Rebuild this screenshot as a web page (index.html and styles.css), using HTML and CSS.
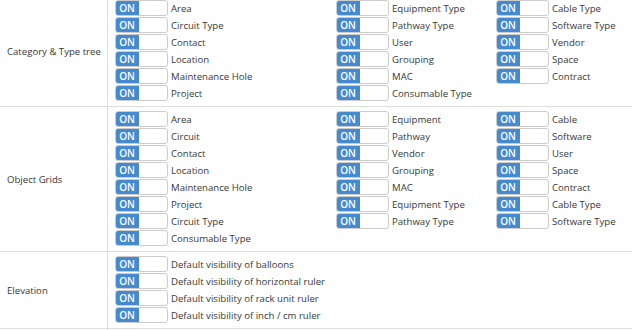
FILE: index.html
```html
<!DOCTYPE html>
<html>
<head>
<meta charset="utf-8">
<link rel="stylesheet" href="styles.css">
</head>
<body>
<div class="settings">
  <div class="section">
    <div class="section-label">Category &amp; Type tree</div>
    <div class="section-body">
      <div class="col">
        <div class="opt"><span class="toggle"><span class="on">ON</span></span><span class="opt-label">Area</span></div>
        <div class="opt"><span class="toggle"><span class="on">ON</span></span><span class="opt-label">Circuit Type</span></div>
        <div class="opt"><span class="toggle"><span class="on">ON</span></span><span class="opt-label">Contact</span></div>
        <div class="opt"><span class="toggle"><span class="on">ON</span></span><span class="opt-label">Location</span></div>
        <div class="opt"><span class="toggle"><span class="on">ON</span></span><span class="opt-label">Maintenance Hole</span></div>
        <div class="opt"><span class="toggle"><span class="on">ON</span></span><span class="opt-label">Project</span></div>
      </div>
      <div class="col">
        <div class="opt"><span class="toggle"><span class="on">ON</span></span><span class="opt-label">Equipment Type</span></div>
        <div class="opt"><span class="toggle"><span class="on">ON</span></span><span class="opt-label">Pathway Type</span></div>
        <div class="opt"><span class="toggle"><span class="on">ON</span></span><span class="opt-label">User</span></div>
        <div class="opt"><span class="toggle"><span class="on">ON</span></span><span class="opt-label">Grouping</span></div>
        <div class="opt"><span class="toggle"><span class="on">ON</span></span><span class="opt-label">MAC</span></div>
        <div class="opt"><span class="toggle"><span class="on">ON</span></span><span class="opt-label">Consumable Type</span></div>
      </div>
      <div class="col">
        <div class="opt"><span class="toggle"><span class="on">ON</span></span><span class="opt-label">Cable Type</span></div>
        <div class="opt"><span class="toggle"><span class="on">ON</span></span><span class="opt-label">Software Type</span></div>
        <div class="opt"><span class="toggle"><span class="on">ON</span></span><span class="opt-label">Vendor</span></div>
        <div class="opt"><span class="toggle"><span class="on">ON</span></span><span class="opt-label">Space</span></div>
        <div class="opt"><span class="toggle"><span class="on">ON</span></span><span class="opt-label">Contract</span></div>
      </div>
    </div>
  </div>
  <div class="section">
    <div class="section-label">Object Grids</div>
    <div class="section-body">
      <div class="col">
        <div class="opt"><span class="toggle"><span class="on">ON</span></span><span class="opt-label">Area</span></div>
        <div class="opt"><span class="toggle"><span class="on">ON</span></span><span class="opt-label">Circuit</span></div>
        <div class="opt"><span class="toggle"><span class="on">ON</span></span><span class="opt-label">Contact</span></div>
        <div class="opt"><span class="toggle"><span class="on">ON</span></span><span class="opt-label">Location</span></div>
        <div class="opt"><span class="toggle"><span class="on">ON</span></span><span class="opt-label">Maintenance Hole</span></div>
        <div class="opt"><span class="toggle"><span class="on">ON</span></span><span class="opt-label">Project</span></div>
        <div class="opt"><span class="toggle"><span class="on">ON</span></span><span class="opt-label">Circuit Type</span></div>
        <div class="opt"><span class="toggle"><span class="on">ON</span></span><span class="opt-label">Consumable Type</span></div>
      </div>
      <div class="col">
        <div class="opt"><span class="toggle"><span class="on">ON</span></span><span class="opt-label">Equipment</span></div>
        <div class="opt"><span class="toggle"><span class="on">ON</span></span><span class="opt-label">Pathway</span></div>
        <div class="opt"><span class="toggle"><span class="on">ON</span></span><span class="opt-label">Vendor</span></div>
        <div class="opt"><span class="toggle"><span class="on">ON</span></span><span class="opt-label">Grouping</span></div>
        <div class="opt"><span class="toggle"><span class="on">ON</span></span><span class="opt-label">MAC</span></div>
        <div class="opt"><span class="toggle"><span class="on">ON</span></span><span class="opt-label">Equipment Type</span></div>
        <div class="opt"><span class="toggle"><span class="on">ON</span></span><span class="opt-label">Pathway Type</span></div>
      </div>
      <div class="col">
        <div class="opt"><span class="toggle"><span class="on">ON</span></span><span class="opt-label">Cable</span></div>
        <div class="opt"><span class="toggle"><span class="on">ON</span></span><span class="opt-label">Software</span></div>
        <div class="opt"><span class="toggle"><span class="on">ON</span></span><span class="opt-label">User</span></div>
        <div class="opt"><span class="toggle"><span class="on">ON</span></span><span class="opt-label">Space</span></div>
        <div class="opt"><span class="toggle"><span class="on">ON</span></span><span class="opt-label">Contract</span></div>
        <div class="opt"><span class="toggle"><span class="on">ON</span></span><span class="opt-label">Cable Type</span></div>
        <div class="opt"><span class="toggle"><span class="on">ON</span></span><span class="opt-label">Software Type</span></div>
      </div>
    </div>
  </div>
  <div class="section">
    <div class="section-label">Elevation</div>
    <div class="section-body">
      <div class="col">
        <div class="opt"><span class="toggle"><span class="on">ON</span></span><span class="opt-label">Default visibility of balloons</span></div>
        <div class="opt"><span class="toggle"><span class="on">ON</span></span><span class="opt-label">Default visibility of horizontal ruler</span></div>
        <div class="opt"><span class="toggle"><span class="on">ON</span></span><span class="opt-label">Default visibility of rack unit ruler</span></div>
        <div class="opt"><span class="toggle"><span class="on">ON</span></span><span class="opt-label">Default visibility of inch / cm ruler</span></div>
      </div>
    </div>
  </div>
  <div class="section section-empty">
    <div class="section-label"></div>
    <div class="section-body"></div>
  </div>
</div>
</body>
</html>
```

FILE: styles.css
```css
html, body {
  margin: 0;
  padding: 0;
  background: #fff;
  overflow: hidden;
}
body {
  font-family: "Open Sans", "Liberation Sans", sans-serif;
  font-size: 9.6px;
  color: #383838;
}
.settings {
  margin-top: -4px;
}
.section {
  display: flex;
  border-bottom: 1px solid #ddd;
}
.section-label {
  width: 108px;
  flex: none;
  border-right: 1px solid #ddd;
  display: flex;
  align-items: center;
  padding-left: 7px;
  box-sizing: border-box;
}
.section-body {
  flex: 1;
  display: grid;
  grid-template-columns: 221px 160px 1fr;
  padding: 4px 0 5px 7px;
  align-items: start;
}
.section-empty {
  height: 12px;
  border-bottom: none;
}
.col {
  display: flex;
  flex-direction: column;
  gap: 1px;
}
.opt {
  display: flex;
  align-items: center;
  height: 16px;
  white-space: nowrap;
}
.toggle {
  display: flex;
  width: 53px;
  height: 16px;
  box-sizing: border-box;
  border: 1px solid #ccc;
  border-radius: 3px;
  overflow: hidden;
  background: #fff;
  flex: none;
}
.on {
  width: 24px;
  margin: -1px 0 -1px -1px;
  background: #4589cf;
  color: #fff;
  font-weight: 600;
  font-size: 10px;
  display: flex;
  align-items: center;
  justify-content: center;
  border-radius: 3px 0 0 3px;
}
.opt-label {
  margin-left: 3px;
}
```
